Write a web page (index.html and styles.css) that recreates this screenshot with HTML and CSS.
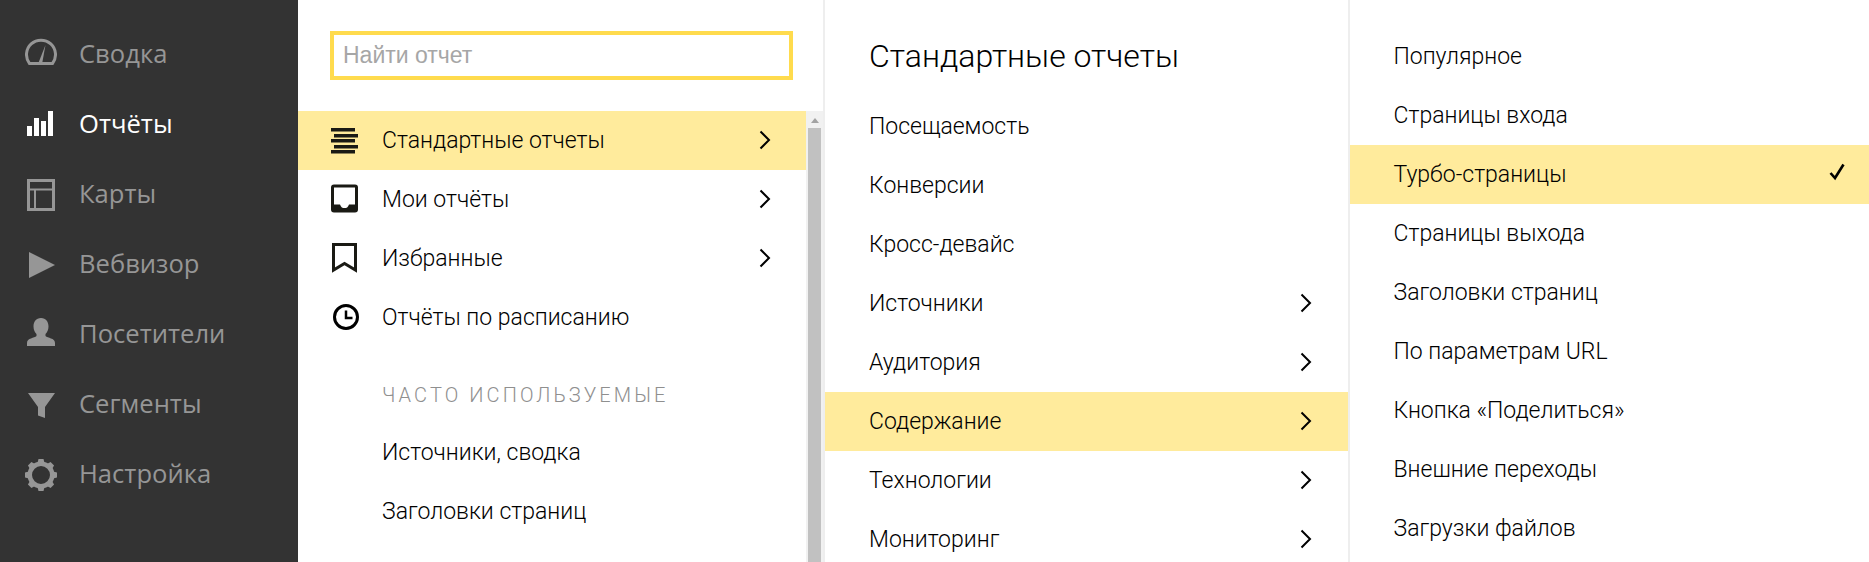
FILE: index.html
```html
<!DOCTYPE html>
<html lang="ru">
<head>
<meta charset="utf-8">
<title>Отчёты</title>
<link rel="stylesheet" href="styles.css">
</head>
<body>
<div class="app">
  <nav class="side">
    <a class="side-item"><svg class="side-icon" viewBox="0 0 32 40"><path d="M4.500 30.500A14.500 14.500 0 1 1 27.500 30.500Z" fill="none" stroke="currentColor" stroke-width="3"/><path d="M13 31L20.500 12L17 31z" fill="currentColor"/></svg><span>Сводка</span></a>
    <a class="side-item active"><svg class="side-icon" viewBox="0 0 32 40"><path d="M2 23h5v10H2zM9 15h5v18H9zM16 18h5v15h-5zM23 8h5v25h-5z" fill="currentColor"/></svg><span>Отчёты</span></a>
    <a class="side-item"><svg class="side-icon" viewBox="0 0 32 40"><path d="M3.500 7.500h25v29h-25z" fill="none" stroke="currentColor" stroke-width="3"/><path d="M3.500 16.500h25M10 16.500v20" fill="none" stroke="currentColor" stroke-width="2"/></svg><span>Карты</span></a>
    <a class="side-item"><svg class="side-icon" viewBox="0 0 32 40"><path d="M4 9L30 22L4 35z" fill="currentColor"/></svg><span>Вебвизор</span></a>
    <a class="side-item"><svg class="side-icon" viewBox="0 0 32 40"><path d="M16 5c5 0 7.500 4 7.500 8.500c0 3.500-1.500 6-3 7.500v2c2 2 9.500 2 9.500 7V33H2v-3c0-5 7.500-5 9.500-7v-2c-1.500-1.500-3-4-3-7.500C8.500 9 11 5 16 5z" fill="currentColor"/></svg><span>Посетители</span></a>
    <a class="side-item"><svg class="side-icon" viewBox="0 0 32 40"><path d="M3 10H30L20 24V35L13 32.500V24z" fill="currentColor"/></svg><span>Сегменты</span></a>
    <a class="side-item"><svg class="side-icon" viewBox="0 0 32 40"><circle cx="16" cy="22" r="11.250" fill="none" stroke="currentColor" stroke-width="4.500"/><g fill="currentColor"><path d="M13.500 6h5l1.500 6h-8z"/><path d="M13.500 6h5l1.500 6h-8z" transform="rotate(45 16 22)"/><path d="M13.500 6h5l1.500 6h-8z" transform="rotate(90 16 22)"/><path d="M13.500 6h5l1.500 6h-8z" transform="rotate(135 16 22)"/><path d="M13.500 6h5l1.500 6h-8z" transform="rotate(180 16 22)"/><path d="M13.500 6h5l1.500 6h-8z" transform="rotate(225 16 22)"/><path d="M13.500 6h5l1.500 6h-8z" transform="rotate(270 16 22)"/><path d="M13.500 6h5l1.500 6h-8z" transform="rotate(315 16 22)"/></g></svg><span>Настройка</span></a>
  </nav>

  <section class="col-one">
    <div class="search-wrap"><input class="search" type="text" placeholder="Найти отчет"></div>
    <div class="scroll-area">
      <div class="list-one">
        <a class="row row-icon selected"><svg class="row-icon-svg" viewBox="0 0 30 30"><path d="M1 3h24v3.500H1zM4 9h24v3.500H4zM1 14h24v3.500H1zM4 20h24v3.500H4zM1 25h24v3.500H1z" fill="#1a1a14"/></svg><span class="label">Стандартные отчеты</span><svg class="chev" viewBox="0 0 12 20"><path d="M1.500 1.500L10 10l-8.500 8.500" fill="none" stroke="#000" stroke-width="2"/></svg></a>
        <a class="row row-icon"><svg class="row-icon-svg" viewBox="0 0 30 30"><path d="M4 .5h21a3 3 0 0 1 3 3v22a3 3 0 0 1-3 3H4a3 3 0 0 1-3-3v-22a3 3 0 0 1 3-3zM4 3.500V20.500h6c1 3 2.500 3.500 4.500 3.500s3.500-.5 4.500-3.500h6V3.500z" fill="#1a1a14" fill-rule="evenodd"/></svg><span class="label">Мои отчёты</span><svg class="chev" viewBox="0 0 12 20"><path d="M1.500 1.500L10 10l-8.500 8.500" fill="none" stroke="#000" stroke-width="2"/></svg></a>
        <a class="row row-icon"><svg class="row-icon-svg" viewBox="0 0 30 30"><path d="M3.500 1.500h22v25.500l-11-6.500-11 6.500z" fill="none" stroke="#1a1a14" stroke-width="3"/></svg><span class="label">Избранные</span><svg class="chev" viewBox="0 0 12 20"><path d="M1.500 1.500L10 10l-8.500 8.500" fill="none" stroke="#000" stroke-width="2"/></svg></a>
        <a class="row row-icon"><svg class="row-icon-svg" viewBox="0 0 30 30"><circle cx="16" cy="15" r="11.500" fill="none" stroke="#000" stroke-width="3"/><path d="M16 8.500v7.500h6.500" fill="none" stroke="#000" stroke-width="2.500"/></svg><span class="label">Отчёты по расписанию</span></a>
        <div class="group-title">ЧАСТО ИСПОЛЬЗУЕМЫЕ</div>
        <a class="row row-plain">Источники, сводка</a>
        <a class="row row-plain">Заголовки страниц</a>
      </div>
      <div class="scrollbar"><i class="scroll-up"></i><i class="thumb"></i></div>
    </div>
  </section>

  <section class="col-two">
    <h2 class="col-title">Стандартные отчеты</h2>
    <a class="row row-wide">Посещаемость</a>
    <a class="row row-wide">Конверсии</a>
    <a class="row row-wide">Кросс-девайс</a>
    <a class="row row-wide"><span class="label">Источники</span><svg class="chev" viewBox="0 0 12 20"><path d="M1.500 1.500L10 10l-8.500 8.500" fill="none" stroke="#000" stroke-width="2"/></svg></a>
    <a class="row row-wide"><span class="label">Аудитория</span><svg class="chev" viewBox="0 0 12 20"><path d="M1.500 1.500L10 10l-8.500 8.500" fill="none" stroke="#000" stroke-width="2"/></svg></a>
    <a class="row row-wide selected"><span class="label">Содержание</span><svg class="chev" viewBox="0 0 12 20"><path d="M1.500 1.500L10 10l-8.500 8.500" fill="none" stroke="#000" stroke-width="2"/></svg></a>
    <a class="row row-wide"><span class="label">Технологии</span><svg class="chev" viewBox="0 0 12 20"><path d="M1.500 1.500L10 10l-8.500 8.500" fill="none" stroke="#000" stroke-width="2"/></svg></a>
    <a class="row row-wide"><span class="label">Мониторинг</span><svg class="chev" viewBox="0 0 12 20"><path d="M1.500 1.500L10 10l-8.500 8.500" fill="none" stroke="#000" stroke-width="2"/></svg></a>
  </section>

  <section class="col-three">
    <a class="row row-wide">Популярное</a>
    <a class="row row-wide">Страницы входа</a>
    <a class="row row-wide selected"><span class="label">Турбо-страницы</span><svg class="check" viewBox="0 0 16 18"><path d="M1.500 10l4.500 5L14.500 1.500" fill="none" stroke="#000" stroke-width="2.600"/></svg></a>
    <a class="row row-wide">Страницы выхода</a>
    <a class="row row-wide">Заголовки страниц</a>
    <a class="row row-wide">По параметрам URL</a>
    <a class="row row-wide">Кнопка «Поделиться»</a>
    <a class="row row-wide">Внешние переходы</a>
    <a class="row row-wide">Загрузки файлов</a>
  </section>
</div>
</body>
</html>
```

FILE: styles.css
```css
* { box-sizing: border-box; }
html, body { margin: 0; height: 100%; background: #fff; overflow: hidden; }
.app { display: flex; width: 1869px; height: 562px; overflow: hidden; font-family: Roboto, "Liberation Sans", sans-serif; font-size: 23px; font-weight: 300; color: #000; }

.side { width: 298px; flex: none; background: #333; padding-top: 18px; }
.side-item { display: flex; align-items: center; height: 70px; padding-left: 25px; font-family: "Open Sans", sans-serif; font-size: 25.600px; font-weight: 400; color: #969696; }
.side-item.active { color: #fff; }
.side-icon { width: 32px; height: 40px; flex: none; margin-right: 22px; }

.col-one { width: 527px; flex: none; display: flex; flex-direction: column; height: 562px; border-right: 2px solid #eee; }
.search-wrap { padding: 31px 30px 31px 32px; height: 111px; }
.search { display: block; width: 463px; height: 49px; border: 4px solid #ffdb4d; outline: 0; padding: 0 9px; font-family: "Liberation Sans", sans-serif; font-size: 23px; background: #fff; }
.search::placeholder { color: #a6a6a6; opacity: 1; }
.scroll-area { display: flex; flex: 1; min-height: 0; }
.list-one { flex: 1; }
.row { display: flex; align-items: center; height: 59px; padding-bottom: 1px; }
.selected { background: #ffeb9c; }
.row-icon { padding-left: 32px; padding-right: 35px; }
.row-icon-svg { width: 30px; height: 30px; flex: none; margin-right: 22px; }
.label { flex: 1; }
.chev { width: 12px; height: 20px; flex: none; }
.group-title { height: 76px; padding: 36px 0 0 84px; font-size: 20px; line-height: 24px; letter-spacing: 3.100px; color: #8f8f8f; }
.row-plain { padding-left: 84px; }
.scrollbar { width: 17px; flex: none; background: #f1f1f1; display: flex; flex-direction: column; align-items: center; }
.scroll-up { display: block; width: 0; height: 0; margin: 7px 0 5px; border: 4px solid transparent; border-top: 0; border-bottom: 5px solid #a3a3a3; }
.thumb { display: block; width: 13px; flex: 1; background: #c1c1c1; }

.col-two { width: 523px; flex: none; height: 562px; overflow: hidden; }
.col-title { margin: 0; height: 97px; padding: 38px 0 0 44px; font-size: 32px; line-height: 36px; font-weight: 300; }
.col-two .row-wide { padding: 0 36px 1px 44px; }

.col-three { flex: 1; height: 562px; overflow: hidden; border-left: 2px solid #eee; padding-top: 27px; }
.col-three .row-wide { padding: 0 24px 1px 43.500px; }
.check { width: 16px; height: 18px; flex: none; margin-bottom: 4px; }
```
